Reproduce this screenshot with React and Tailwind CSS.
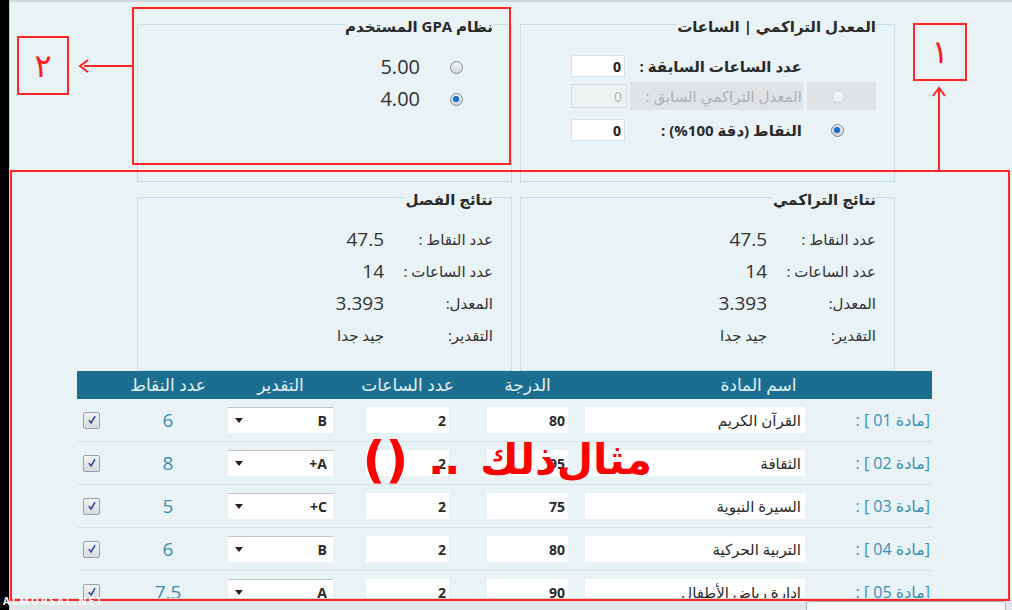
import React from "react";

const subjects = [
  { no: "01", name: "القرآن الكريم", mark: "80", hours: "2", grade: "B", points: "6" },
  { no: "02", name: "الثقافة", mark: "95", hours: "2", grade: "A+", points: "8" },
  { no: "03", name: "السيرة النبوية", mark: "75", hours: "2", grade: "C+", points: "5" },
  { no: "04", name: "التربية الحركية", mark: "80", hours: "2", grade: "B", points: "6" },
  { no: "05", name: "إدارة رياض الأطفال", mark: "90", hours: "2", grade: "A", points: "7.5" },
];

const results = [
  ["عدد النقاط :", "47.5"],
  ["عدد الساعات :", "14"],
  ["المعدل:", "3.393"],
  ["التقدير:", "جيد جدا"],
];

function Radio({ checked, disabled }) {
  return (
    <span
      className={
        disabled
          ? "flex h-[13px] w-[13px] items-center justify-center rounded-full border border-[#cdd1d4] bg-[#eef0f1]"
          : "flex h-[13px] w-[13px] items-center justify-center rounded-full border border-[#7f8890] bg-linear-to-b from-[#f6f6f6] to-[#d2d5d8]"
      }
    >
      {checked && <span className="h-[6px] w-[6px] rounded-full bg-[#1b6fc4] shadow-[0_0_2px_#62b4ff]" />}
    </span>
  );
}

function Check() {
  return (
    <span className="flex h-[17px] w-[17px] items-center justify-center rounded-[2px] border border-[#9aa1a6] bg-linear-to-b from-[#f3f3f3] to-[#d8dbdd]">
      <svg viewBox="0 0 10 10" className="h-[10px] w-[10px]">
        <path d="M2.2 5.6 L4.1 8 L7.8 1.6" fill="none" stroke="#2a3fa6" strokeWidth="1.5" strokeLinecap="round" />
      </svg>
    </span>
  );
}

function Fieldset({ title, className, children }) {
  return (
    <fieldset className={"w-[375px] border border-[#c6dfe6] pr-[18px] " + className}>
      <legend className="pt-[4px] text-[15px] font-bold leading-[18px] text-[#2a2a2a]">{title}</legend>
      {children}
    </fieldset>
  );
}

function Results({ title }) {
  return (
    <Fieldset title={title} className="h-[185px]">
      <div className="mt-[15px] flex flex-col text-[#333]">
        {results.map(([label, value]) => (
          <div key={label} className="flex h-[32px] items-center">
            <span className="w-[109px] text-[15px]">{label}</span>
            <span className={value === "جيد جدا" ? "text-[15px]" : "text-[19px]"}>{value}</span>
          </div>
        ))}
      </div>
    </Fieldset>
  );
}

function HeadCell({ className, children }) {
  return <div className={"flex justify-center whitespace-nowrap " + className}>{children}</div>;
}

export default function App() {
  return (
    <div className="relative flex h-[610px] w-[1012px] overflow-hidden bg-[#e9f2f5] font-['Open_Sans','DejaVu_Sans',sans-serif]">
      <div className="w-[9px] shrink-0 bg-black" />
      <div className="flex min-w-0 flex-1 flex-col border-l border-[#c2ccd1]">
        <div dir="rtl" className="h-[598px] overflow-hidden border-t-2 border-[#cdd7dc] pt-[11px]">
          {/* top fieldsets */}
          <div className="mr-[117px] flex gap-[8px]">
            <Fieldset title="المعدل التراكمي | الساعات" className="h-[169px]">
              <div className="mt-[17px] flex h-[28px] items-center">
                <div className="w-[69px]" />
                <div className="mr-[4px] w-[173px] pr-px text-[15px] font-bold text-[#2b2b2b]">عدد الساعات السابقة :</div>
                <div className="mr-[5px] flex h-[22px] w-[54px] items-center border border-[#d3e6ec] bg-white pr-[3px] text-[14px] font-bold text-[#222]">0</div>
              </div>
              <div className="mt-[2px] flex h-[28px]">
                <div className="flex w-[69px] items-center justify-center bg-[#dfe3e5] pr-[7px]">
                  <Radio disabled />
                </div>
                <div className="mr-[4px] flex w-[173px] items-center bg-[#dfe3e5] pr-px text-[15px] text-[#aeb2b5]">المعدل التراكمي السابق :</div>
                <div className="mr-[3px] flex h-[24px] w-[56px] items-center self-center border border-[#d6dadc] bg-[#eef1f2] pr-[4px] text-[14px] text-[#b3b6b8]">0</div>
              </div>
              <div className="mt-[6px] flex h-[28px] items-center">
                <div className="flex w-[69px] items-center justify-center pr-[9px]">
                  <Radio checked />
                </div>
                <div className="mr-[4px] w-[173px] pr-px text-[15px] font-bold text-[#2b2b2b]">النقاط (دقة 100%) :</div>
                <div className="mr-[5px] flex h-[22px] w-[54px] items-center border border-[#d3e6ec] bg-white pr-[3px] text-[14px] font-bold text-[#222]">0</div>
              </div>
            </Fieldset>
            <Fieldset title="نظام GPA المستخدم" className="h-[169px]">
              {["5.00", "4.00"].map((v, i) => (
                <div key={v} className={(i === 0 ? "mt-[18px]" : "mt-[4px]") + " flex h-[28px] items-center"}>
                  <div className="flex w-[69px] items-center justify-center pr-[5px]">
                    <Radio checked={v === "4.00"} />
                  </div>
                  <span className="mr-[4px] text-[20px] text-[#333]">{v}</span>
                </div>
              ))}
            </Fieldset>
          </div>

          {/* results */}
          <div className="mr-[117px] mt-[4px] flex gap-[8px]">
            <Results title="نتائج التراكمي" />
            <Results title="نتائج الفصل" />
          </div>

          {/* subjects table */}
          <div className="mr-[80px] w-[855px]">
            <div className="flex h-[28px] items-center bg-[#1b6e8f] text-[17px] text-[#e3f0f5]">
              <HeadCell className="w-[347px]">اسم المادة</HeadCell>
              <HeadCell className="mr-[17px] w-[81px]">الدرجة</HeadCell>
              <HeadCell className="mr-[38px] w-[83px]">عدد الساعات</HeadCell>
              <HeadCell className="mr-[33px] w-[105px]">التقدير</HeadCell>
              <HeadCell className="w-[120px]">عدد النقاط</HeadCell>
            </div>
            {subjects.map((s) => (
              <div key={s.no} className="flex h-[43px] items-center border-b border-[#d3e4ea] text-[14px] text-[#2a2a2a]">
                <div className="w-[120px] whitespace-nowrap pr-[2px] text-[16px] text-[#3a8fbc]">{"[مادة " + s.no + " ] :"}</div>
                <div className="mr-[7px] flex h-[26px] w-[220px] items-center bg-white pr-[4px] text-[15px]">{s.name}</div>
                <div className="mr-[17px] flex h-[26px] w-[81px] items-center bg-white pr-[3px] font-bold">{s.mark}</div>
                <div className="mr-[38px] flex h-[26px] w-[83px] items-center bg-white pr-[3px] font-bold">{s.hours}</div>
                <div className="mr-[33px] flex h-[26px] w-[105px] items-center justify-between border-t border-[#c4c4c4] bg-white pl-[7px] pr-[6px] font-bold">
                  <span>{s.grade}</span>
                  <svg viewBox="0 0 8 5" className="h-[5px] w-[8px]">
                    <path d="M0 0 H8 L4 5 Z" fill="#222" />
                  </svg>
                </div>
                <div className="w-[120px] text-center text-[19px] text-[#3a8dba]">{s.points}</div>
                <div className="mr-[8px]">
                  <Check />
                </div>
              </div>
            ))}
          </div>
        </div>
        <div className="flex h-[12px] justify-end border-t border-[#cfd6d9] bg-[#e1e6e8] pr-[6px] pt-[2px]">
          <div className="h-[10px] w-[200px] rounded-t-[3px] border border-[#a9b1b5] bg-[#f5f6f7]" />
        </div>
      </div>

      {/* red annotations */}
      <div className="pointer-events-none absolute left-[10px] top-[170px] h-[431px] w-[1000px] border-2 border-[#ff2626]" />
      <div className="pointer-events-none absolute left-[132px] top-[7px] h-[158px] w-[379px] border-2 border-[#ff2626]" />
      <div className="pointer-events-none absolute left-[17px] top-[36px] flex h-[59px] w-[52px] items-center justify-center border-2 border-[#ff2626] font-['DejaVu_Sans',sans-serif] text-[32px] text-[#ff1a1a]">
        ٢
      </div>
      <div className="pointer-events-none absolute left-[913px] top-[23px] flex h-[58px] w-[54px] items-center justify-center border-2 border-[#ff2626] font-['DejaVu_Sans',sans-serif] text-[32px] text-[#ff1a1a]">
        ١
      </div>
      <svg className="pointer-events-none absolute left-0 top-0 h-[610px] w-[1012px]" viewBox="0 0 1012 610">
        <line x1="84" y1="66" x2="132" y2="66" stroke="#ff2626" strokeWidth="2" />
        <path d="M88 60 L80 66 L88 72" fill="none" stroke="#ff2626" strokeWidth="2" />
        <line x1="939" y1="90" x2="939" y2="170" stroke="#ff2626" strokeWidth="2" />
        <path d="M933 96 L939 88 L945 96" fill="none" stroke="#ff2626" strokeWidth="2" />
      </svg>
      <div
        dir="rtl"
        className="pointer-events-none absolute right-[360px] top-[430px] flex items-center gap-[20px] whitespace-nowrap font-['DejaVu_Sans',sans-serif] text-[42px] font-bold leading-[60px] text-[#ff0000]"
      >
        <span>{"مثال\u200Cذلك"}</span>
        <span>..</span>
        <span className="text-[50px]">()</span>
      </div>
      <div className="pointer-events-none absolute bottom-[4px] left-[3px] text-[10px] font-bold leading-none tracking-[2px] text-white">
        ALMORSAL.NET
      </div>
    </div>
  );
}
